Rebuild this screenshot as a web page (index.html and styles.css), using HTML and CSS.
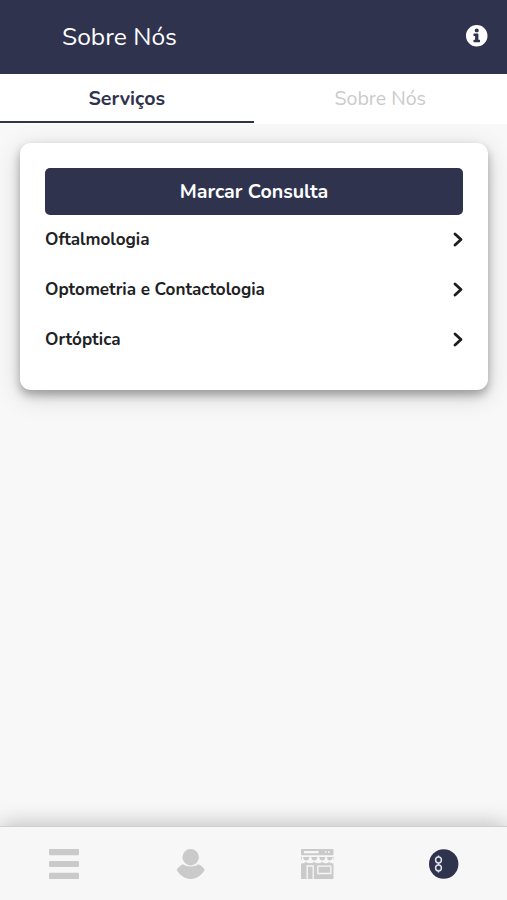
FILE: index.html
```html
<!DOCTYPE html>
<html lang="pt">
<head>
<meta charset="utf-8">
<meta name="viewport" content="width=device-width, initial-scale=1">
<title>Sobre Nós</title>
<link rel="stylesheet" href="styles.css">
</head>
<body>
<header class="topbar">
  <h1 class="title">Sobre Nós</h1>
  <svg class="info" viewBox="8 8 496 496"><path d="M256 8C119.043 8 8 119.083 8 256c0 136.997 111.043 248 248 248s248-111.003 248-248C504 119.083 392.957 8 256 8zm0 78c26 0 46 20 46 46s-20 46-46 46-46-20-46-46 20-46 46-46zm76 306c0 6.627-5.373 12-12 12H192c-6.627 0-12-5.373-12-12v-34c0-6.627 5.373-12 12-12h26v-84h-26c-6.627 0-12-5.373-12-12v-34c0-6.627 5.373-12 12-12h90c6.627 0 12 5.373 12 12v130h26c6.627 0 12 5.373 12 12v34z"/></svg>
</header>
<nav class="tabs">
  <a class="tab active">Serviços</a>
  <a class="tab">Sobre Nós</a>
</nav>
<main class="content">
  <section class="card">
    <button class="book">Marcar Consulta</button>
    <ul class="list">
      <li class="row"><span>Oftalmologia</span><svg class="chevron" viewBox="0 0 10 15"><path d="M2 2 8 7.500 2 13"/></svg></li>
      <li class="row"><span>Optometria e Contactologia</span><svg class="chevron" viewBox="0 0 10 15"><path d="M2 2 8 7.500 2 13"/></svg></li>
      <li class="row"><span>Ortóptica</span><svg class="chevron" viewBox="0 0 10 15"><path d="M2 2 8 7.500 2 13"/></svg></li>
    </ul>
  </section>
</main>
<footer class="bottombar">
  <a class="item"><svg width="34" height="30" viewBox="0 0 34 30"><rect x="3" y="0" width="30" height="6.200" rx=".8"/><rect x="3" y="11.900" width="30" height="6.200" rx=".8"/><rect x="3" y="23.800" width="30" height="6.200" rx=".8"/></svg></a>
  <a class="item"><svg width="34" height="30" viewBox="0 0 34 30"><circle cx="17.700" cy="8.300" r="8.200"/><path d="M10 15.200c4.500 3 11 3 15.500 0 2.800 1.300 5 3.300 6.200 5.900-2.900 5.200-7.900 8.800-14 8.800S6.500 26.300 3.700 21.100c1.200-2.600 3.500-4.600 6.300-5.900z"/></svg></a>
  <a class="item"><svg width="34" height="30" viewBox="0 0 34 30">
    <rect x="1" y="0" width="32.500" height="6.300" rx="1.200"/>
    <path d="M1 14.500q2.800 0 4.800-1.600 4.200 2.600 8.400 0 4 2.600 8 0 4 2.600 7.300 0 1.500 1.600 4 1.600V30H1z"/>
    <path d="M3 8h6.400q-.6 3.500-3.200 3.500T3 8zm8.200 0h6.200q-.5 3.500-3.100 3.500T11.200 8zm8 0h6.200q-.5 3.500-3.100 3.500T19.200 8zm7.800 0h5.500q-.5 3.500-2.900 3.500T27 8zM1 7.800h.9L1.500 11H1zm31.600 0h.9V11h-.4z"/>
    <path class="gap" d="M4 2h14.500v2.300H4zM25 2.200h1.500v1.500H25zm3 0h1.500v1.500H28z"/>
    <path class="outline" d="M7.200 30V17h6v13M17.800 17.200h13v7.300h-13z"/>
  </svg></a>
  <a class="item"><svg width="34" height="30" viewBox="0 0 34 30"><circle class="disc" cx="16.700" cy="15" r="14.700"/><g class="mark"><circle cx="11.500" cy="11" r="2.900"/><circle cx="11.500" cy="18.900" r="2.900"/><path d="M11.500 6.500v1.600m0 5.800v2.100m0 5.800v1.600"/></g></svg></a>
</footer>
</body>
</html>
```
FILE: styles.css
```css
* { box-sizing: border-box; }
body {
  margin: 0;
  height: 100vh;
  display: flex;
  flex-direction: column;
  overflow: hidden;
  background: #f8f8f8;
  color: #202124;
  font-family: Nunito, Lato, "Open Sans", sans-serif;
}
svg { display: block; flex: none; }
.topbar {
  height: 74px;
  flex: none;
  padding: 0 19.500px 2px 62px;
  display: flex;
  align-items: center;
  justify-content: space-between;
  background: #30334e;
  color: #fff;
}
.title { margin: 0; padding-top: 2px; font-size: 24.600px; font-weight: 400; }
.info { width: 21.500px; height: 21.500px; fill: #fff; }
.tabs { height: 50px; flex: none; display: flex; background: #fff; }
.tab {
  width: 253.500px;
  height: 49px;
  padding-top: 2px;
  display: flex;
  align-items: center;
  justify-content: center;
  font-size: 19.600px;
  color: #cbcbcb;
  border-bottom: 2px solid transparent;
}
.active { color: #30334e; font-weight: 700; border-color: #30334e; }
.content { flex: 1; padding: 19px 19px 0 20px; }
.card {
  height: 247px;
  padding: 25px;
  border-radius: 11px;
  background: #fff;
  box-shadow: 0 5px 10px rgba(0,0,0,.3), 0 6px 26px rgba(0,0,0,.16);
}
.book {
  display: block;
  width: 100%;
  height: 46.500px;
  padding: 0;
  border: 0;
  border-radius: 5px;
  background: #30334e;
  color: #fff;
  font: 700 19.600px Nunito, Lato, "Open Sans", sans-serif;
}
.list { list-style: none; margin: 0; padding: 0; }
.row {
  height: 50px;
  padding-bottom: 1px;
  display: flex;
  align-items: center;
  justify-content: space-between;
  font-size: 17.080px;
  font-weight: 700;
}
.chevron { width: 10px; height: 15px; fill: none; stroke: #1d1d1f; stroke-width: 2.800; stroke-linecap: round; stroke-linejoin: round; }
.bottombar {
  height: 74px;
  flex: none;
  display: grid;
  grid-template-columns: repeat(4, 1fr);
  align-items: center;
  border-top: 1px solid #d0d0d0;
  background: #f7f7f7;
  box-shadow: 0 -1px 22px rgba(0,0,0,.26);
}
.item { display: flex; justify-content: center; fill: #cacaca; }
.gap { fill: #f7f7f7; }
.outline { fill: none; stroke: #f7f7f7; stroke-width: 1.300; }
.disc { fill: #30334e; }
.mark { fill: none; stroke: #dfe0e8; stroke-width: 1.500; }
```
